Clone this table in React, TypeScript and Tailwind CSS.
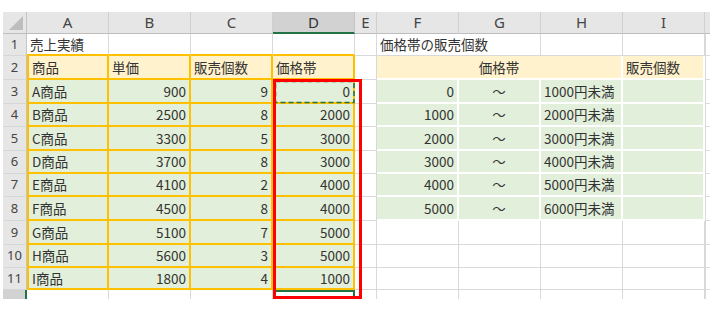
import React from "react";

const GRID = "border-r border-b border-[#d9d9d9]";
const LT_HEAD = "bg-[#fff2cc] border-r-2 border-b-2 border-[#ffc000]";
const LT_BODY = "bg-[#e2efda] border-r-2 border-b-2 border-[#ffc000]";
const RT_HEAD = "bg-[#fff2cc] border-r-2 border-b-2 border-white";
const RT_BODY = "bg-[#e2efda] border-r-2 border-b-2 border-white";
const TXT = "flex items-center overflow-visible whitespace-nowrap px-[3px] text-[13.5px] text-[#333]";

const leftData: [string, string, string, string][] = [
  ["A商品", "900", "9", "0"],
  ["B商品", "2500", "8", "2000"],
  ["C商品", "3300", "5", "3000"],
  ["D商品", "3700", "8", "3000"],
  ["E商品", "4100", "2", "4000"],
  ["F商品", "4500", "8", "4000"],
  ["G商品", "5100", "7", "5000"],
  ["H商品", "5600", "3", "5000"],
  ["I商品", "1800", "4", "1000"],
];

const rightData: [string, string][] = [
  ["0", "1000円未満"],
  ["1000", "2000円未満"],
  ["2000", "3000円未満"],
  ["3000", "4000円未満"],
  ["4000", "5000円未満"],
  ["5000", "6000円未満"],
];

function RowHead({ n, active }: { n?: number | string; active?: boolean }) {
  return (
    <div
      className={
        active
          ? "bg-[#d2d2d2] border-r-2 border-[#217346]"
          : "flex items-center justify-center bg-[#e6e6e6] border-r border-b border-r-[#c4c4c4] border-b-[#d6d6d6] text-[13px] text-[#444]"
      }
      style={{ fontFamily: '"Noto Sans", sans-serif' }}
    >
      {n}
    </div>
  );
}

export default function App() {
  const colLetters = ["A", "B", "C", "D", "E", "F", "G", "H", "I"];
  return (
    <div className="w-[718px] h-[312px] bg-white overflow-hidden" style={{ fontFamily: '"Noto Sans CJK JP", sans-serif' }}>
      <div className="relative ml-[3px] mt-[12px] w-fit">
        <div className="grid grid-cols-[24px_82px_82px_82px_82px_22px_82px_82px_82px_82px_5px] grid-rows-[22px_22px_24px_24px_23px_24px_23px_23px_24px_24px_23px_22px_9px]">
          {/* Column header row */}
          <div className="relative bg-[#e6e6e6] border-r border-b border-r-[#c4c4c4] border-b-[#bdbdbd]">
            <svg className="absolute right-[3px] bottom-[3px]" width="14" height="14" viewBox="0 0 14 14">
              <polygon points="14,0 14,14 0,14" fill="#bdbdbd" />
            </svg>
          </div>
          {colLetters.map((l) => (
            <div
              key={l}
              className={
                l === "D"
                  ? "flex items-center justify-center bg-[#d2d2d2] border-r border-b-2 border-r-[#c4c4c4] border-b-[#217346] text-[15px] text-[#333]"
                  : "flex items-center justify-center bg-[#e6e6e6] border-r border-b border-r-[#d0d0d0] border-b-[#bdbdbd] text-[15px] text-[#444]"
              }
              style={{ fontFamily: '"Noto Sans", sans-serif' }}
            >
              {l}
            </div>
          ))}
          <div className="bg-[#e6e6e6] border-b border-b-[#bdbdbd]" />

          {/* Row 1 */}
          <RowHead n={1} />
          <div className={`${TXT} border-r border-r-[#d9d9d9] border-b-2 border-b-[#ffc000]`}>売上実績</div>
          <div className="border-r border-r-[#d9d9d9] border-b-2 border-b-[#ffc000]" />
          <div className="border-r border-r-[#d9d9d9] border-b-2 border-b-[#ffc000]" />
          <div className="border-r border-r-[#d9d9d9] border-b-2 border-b-[#ffc000]" />
          <div className={GRID} />
          <div className={`${TXT} col-span-2 ${GRID}`}>価格帯の販売個数</div>
          <div className={GRID} />
          <div className={GRID} />
          <div className="border-l border-b border-[#d9d9d9]" />

          {/* Row 2 */}
          <RowHead n={2} />
          <div className={`${TXT} ${LT_HEAD} border-l-2`}>商品</div>
          <div className={`${TXT} ${LT_HEAD}`}>単価</div>
          <div className={`${TXT} ${LT_HEAD}`}>販売個数</div>
          <div className={`${TXT} ${LT_HEAD}`}>価格帯</div>
          <div className={GRID} />
          <div className={`${TXT} justify-center col-span-3 ${RT_HEAD}`}>価格帯</div>
          <div className={`${TXT} ${RT_HEAD}`}>販売個数</div>
          <div className="border-l border-b border-[#d9d9d9]" />

          {/* Rows 3-11 */}
          {leftData.map((row, i) => {
            const r = i + 3;
            const right = rightData[i];
            return (
              <React.Fragment key={r}>
                <RowHead n={r} />
                <div className={`${TXT} ${LT_BODY} border-l-2`}>{row[0]}</div>
                <div className={`${TXT} justify-end ${LT_BODY}`}>{row[1]}</div>
                <div className={`${TXT} justify-end ${LT_BODY}`}>{row[2]}</div>
                <div className={`${TXT} justify-end relative ${LT_BODY}`}>
                  {row[3]}
                  {r === 3 && (
                    <svg className="absolute left-[1px] top-0" width="81" height="24" viewBox="0 0 81 24">
                      <rect x="1.5" y="1.5" width="78.5" height="21" fill="none" stroke="#217346" strokeWidth="1.6" strokeDasharray="5 3" />
                    </svg>
                  )}
                </div>
                <div className={GRID} />
                {right ? (
                  <>
                    <div className={`${TXT} justify-end ${RT_BODY}`}>{right[0]}</div>
                    <div className={`${TXT} justify-center ${RT_BODY}`}>～</div>
                    <div className={`${TXT} ${RT_BODY}`}>{right[1]}</div>
                    <div className={RT_BODY} />
                  </>
                ) : (
                  <>
                    <div className={GRID} />
                    <div className={GRID} />
                    <div className={GRID} />
                    <div className={GRID} />
                  </>
                )}
                <div className="border-l border-b border-[#d9d9d9]" />
              </React.Fragment>
            );
          })}

          {/* Row 12 (partial) */}
          <RowHead active />
          <div className="border-r border-[#d9d9d9]" />
          <div className="border-r border-[#d9d9d9]" />
          <div className="border-r border-[#d9d9d9]" />
          <div className="border-t-2 border-r-2 border-[#217346]" />
          <div className="border-r border-[#d9d9d9]" />
          <div className="border-r border-[#d9d9d9]" />
          <div className="border-r border-[#d9d9d9]" />
          <div className="border-r border-[#d9d9d9]" />
          <div className="border-r border-[#d9d9d9]" />
          <div className="border-l border-[#d9d9d9]" />
        </div>

        {/* Red highlight rectangle */}
        <div className="absolute left-[270px] top-[67px] w-[89px] h-[220px] border-[3px] border-[#ff0000] pointer-events-none" />
      </div>
    </div>
  );
}
